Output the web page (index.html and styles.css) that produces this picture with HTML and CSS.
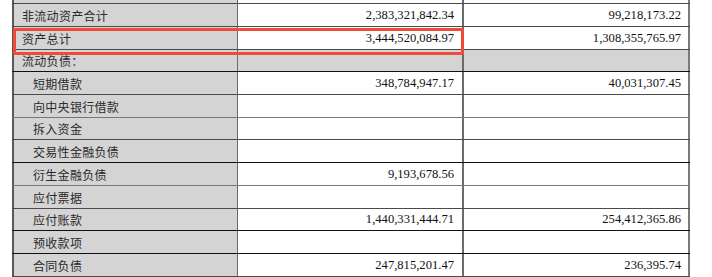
FILE: index.html
```html
<!DOCTYPE html>
<html lang="zh-CN">
<head>
<meta charset="utf-8">
<link rel="stylesheet" href="styles.css">
</head>
<body>
<div class="page">
  <div class="sheet">
    <div class="row r-top"><div class="cell label"></div><div class="cell num"></div><div class="cell num"></div></div>
    <div class="row r23"><div class="cell label">非流动资产合计</div><div class="cell num">2,383,321,842.34</div><div class="cell num">99,218,173.22</div></div>
    <div class="row r23"><div class="cell label">资产总计</div><div class="cell num">3,444,520,084.97</div><div class="cell num">1,308,355,765.97</div></div>
    <div class="row r22 dark section"><div class="cell label">流动负债：</div><div class="cell num"></div><div class="cell num"></div></div>
    <div class="row r23"><div class="cell label sub">短期借款</div><div class="cell num">348,784,947.17</div><div class="cell num">40,031,307.45</div></div>
    <div class="row r23 mid"><div class="cell label sub">向中央银行借款</div><div class="cell num"></div><div class="cell num"></div></div>
    <div class="row r22"><div class="cell label sub">拆入资金</div><div class="cell num"></div><div class="cell num"></div></div>
    <div class="row r23 dark"><div class="cell label sub">交易性金融负债</div><div class="cell num"></div><div class="cell num"></div></div>
    <div class="row r23 mid"><div class="cell label sub">衍生金融负债</div><div class="cell num">9,193,678.56</div><div class="cell num"></div></div>
    <div class="row r23"><div class="cell label sub">应付票据</div><div class="cell num"></div><div class="cell num"></div></div>
    <div class="row r22 dark"><div class="cell label sub">应付账款</div><div class="cell num">1,440,331,444.71</div><div class="cell num">254,412,365.86</div></div>
    <div class="row r23 dark"><div class="cell label sub">预收款项</div><div class="cell num"></div><div class="cell num"></div></div>
    <div class="row r23"><div class="cell label sub">合同负债</div><div class="cell num">247,815,201.47</div><div class="cell num">236,395.74</div></div>
  </div>
  <div class="highlight"></div>
</div>
</body>
</html>
```

FILE: styles.css
```css
* { box-sizing: border-box; }
html, body {
  margin: 0;
  padding: 0;
  background: #ffffff;
}
.page {
  position: relative;
  width: 712px;
  height: 277px;
  overflow: hidden;
}
.sheet {
  margin-left: 12px;
  width: 678px;
  display: flex;
  flex-direction: column;
}
.row {
  display: grid;
  grid-template-columns: 226px 226px 226px;
  border-bottom: 1px solid #4a4a4a;
}
.row.dark { border-bottom-color: #111111; }
.row.mid { border-bottom-color: #777777; }
.r-top { height: 4px; }
.r23 { height: 23px; }
.r22 { height: 22px; }
.cell {
  display: flex;
  align-items: center;
  border-right: 1px solid #6a6a6a;
  background: #ffffff;
  overflow: hidden;
  white-space: nowrap;
}
.cell.label {
  border-left: 2px solid #5a5a5a;
  background: #d4d4d4;
  padding-left: 8px;
  font-family: "Noto Sans CJK SC", "Noto Sans", sans-serif;
  font-size: 12px;
  letter-spacing: 0.3px;
  color: #2a2a2a;
}
.cell.label.sub { padding-left: 19px; }
.cell.num {
  justify-content: flex-end;
  padding-right: 8px;
  font-family: "Liberation Serif", "Times New Roman", serif;
  font-size: 12.6px;
  color: #111111;
}
.row .cell:nth-child(2) { border-right: 2px solid #6a6a6a; }
.row .cell:nth-child(3) { border-right: 2px solid #7a7a7a; padding-right: 7px; }
.section .cell { background: #d4d4d4; }
.section .cell.label { align-items: flex-start; padding-top: 2px; }
.highlight {
  position: absolute;
  left: 13px;
  top: 28px;
  width: 451px;
  height: 27px;
  border: 3px solid #ef4a3a;
  border-radius: 2px;
}
```
